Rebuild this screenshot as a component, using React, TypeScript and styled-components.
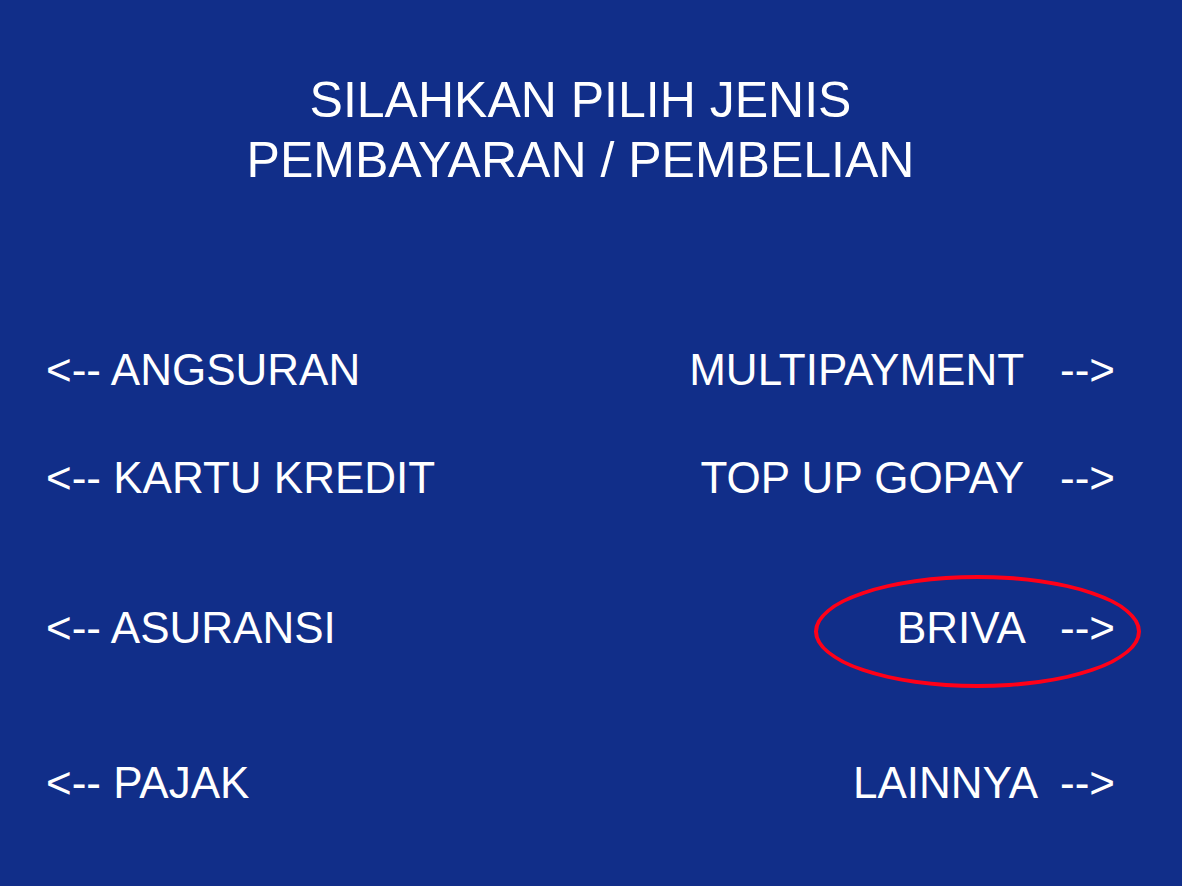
import React from "react";
import styled, { createGlobalStyle } from "styled-components";

const GlobalStyle = createGlobalStyle`
  *, *::before, *::after {
    box-sizing: border-box;
  }

  body {
    margin: 0;
    background: #112e89;
    color: #ffffff;
    font-family: "Liberation Sans", Arial, sans-serif;
  }
`;

const Screen = styled.main`
  min-height: 100vh;
  padding: 70px 67px 60px 46px;
`;

const Title = styled.h1`
  margin: 0 0 156px;
  font-size: 50px;
  font-weight: 400;
  line-height: 60px;
  text-align: center;
`;

const Line = styled.span`
  display: block;
`;

const Menu = styled.nav`
  display: flex;
  flex-direction: column;
`;

const Row = styled.div<{ $gap: number }>`
  display: flex;
  justify-content: space-between;
  margin-bottom: ${({ $gap }) => $gap}px;
`;

const Option = styled.button`
  position: relative;
  padding: 0;
  border: 0;
  background: none;
  color: inherit;
  cursor: pointer;
  font-family: inherit;
  font-size: 44px;
  line-height: 48px;
  white-space: pre;
`;

const HighlightedOption = styled(Option)`
  &::after {
    content: "";
    position: absolute;
    inset: -29px -26px -36px -83px;
    border: 4px solid #ff0018;
    border-radius: 50%;
    pointer-events: none;
  }
`;

const rows = [
  { left: "ANGSURAN", right: "MULTIPAYMENT   -->", gap: 60 },
  { left: "KARTU KREDIT", right: "TOP UP GOPAY   -->", gap: 102 },
  { left: "ASURANSI", right: "BRIVA   -->", gap: 107, highlighted: true },
  { left: "PAJAK", right: "LAINNYA  -->", gap: 0 },
];

export default function App() {
  return (
    <>
      <GlobalStyle />
      <Screen>
        <Title>
          <Line>SILAHKAN PILIH JENIS</Line>
          <Line>PEMBAYARAN / PEMBELIAN</Line>
        </Title>
        <Menu>
          {rows.map(({ left, right, gap, highlighted }) => {
            const RightOption = highlighted ? HighlightedOption : Option;
            return (
              <Row key={left} $gap={gap}>
                <Option type="button">{`<-- ${left}`}</Option>
                <RightOption type="button">{right}</RightOption>
              </Row>
            );
          })}
        </Menu>
      </Screen>
    </>
  );
}
